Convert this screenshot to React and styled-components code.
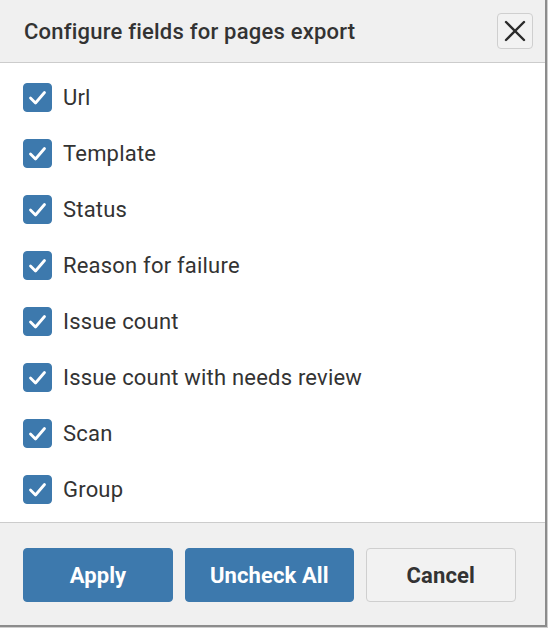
import React from "react";
import styled, { createGlobalStyle } from "styled-components";

const Global = createGlobalStyle`
  html, body { margin: 0; padding: 0; background: #cfcfcf; }
  body { font-family: Roboto, "Liberation Sans", Arial, sans-serif; color: #333; }
  * { box-sizing: border-box; }
`;

const Dialog = styled.div`
  width: 547px;
  height: 627px;
  background: #fff;
  border-right: 2px solid #8c8c8c;
  border-bottom: 2px solid #8c8c8c;
  display: flex;
  flex-direction: column;
`;

const Header = styled.div`
  height: 63px;
  flex: none;
  display: flex;
  align-items: center;
  justify-content: space-between;
  padding: 0 12px 0 24px;
  background: #f0f0f0;
  border-bottom: 1px solid #cccccc;
`;

const Title = styled.h2`
  margin: 0;
  font-size: 22px;
  font-weight: 500;
  letter-spacing: 0.22px;
  color: #333;
`;

const CloseButton = styled.button`
  width: 36px;
  height: 36px;
  padding: 0;
  display: flex;
  align-items: center;
  justify-content: center;
  background: #f2f2f2;
  border: 1px solid #cfcfcf;
  border-radius: 4px;
  color: #2b2b2b;
  cursor: pointer;
`;

const Body = styled.div`
  flex: 1;
  padding: 6px 23px 5px;
  display: flex;
  flex-direction: column;
`;

const Row = styled.label`
  height: 56px;
  display: flex;
  align-items: center;
  gap: 11px;
  font-size: 22px;
  letter-spacing: 0.2px;
  color: #333;
  cursor: pointer;
`;

const Box = styled.span`
  width: 29px;
  height: 29px;
  flex: none;
  border-radius: 4px;
  background: ${(p) => (p.$checked ? "#3d79ad" : "#fff")};
  border: 1px solid ${(p) => (p.$checked ? "#3d79ad" : "#999")};
  display: flex;
  align-items: center;
  justify-content: center;
`;

const Footer = styled.div`
  flex: none;
  display: flex;
  gap: 12px;
  padding: 25px 23px 23px;
  background: #f0f0f0;
  border-top: 1px solid #cccccc;
`;

const Button = styled.button`
  height: 54px;
  min-width: 150px;
  padding: 0 24px;
  border-radius: 4px;
  font-family: Roboto, "Liberation Sans", Arial, sans-serif;
  font-size: 22px;
  font-weight: 700;
  letter-spacing: 0.1px;
  cursor: pointer;
  background: ${(p) => (p.$primary ? "#3d79ad" : "#f2f2f2")};
  color: ${(p) => (p.$primary ? "#fff" : "#333")};
  border: 1px solid ${(p) => (p.$primary ? "#3d79ad" : "#cfcfcf")};
`;

const fields = [
  "Url",
  "Template",
  "Status",
  "Reason for failure",
  "Issue count",
  "Issue count with needs review",
  "Scan",
  "Group",
];

const Check = () => (
  <svg width="21" height="21" viewBox="0 0 21 21" fill="none">
    <polyline
      points="3.5,11 8.5,16 17.5,5.5"
      stroke="#fff"
      strokeWidth="2.8"
      strokeLinecap="round"
      strokeLinejoin="round"
    />
  </svg>
);

export default function App() {
  const [checked, setChecked] = React.useState(() => fields.map(() => true));
  return (
    <>
      <Global />
      <Dialog>
        <Header>
          <Title>Configure fields for pages export</Title>
          <CloseButton aria-label="Close">
            <svg width="22" height="22" viewBox="0 0 22 22">
              <path d="M2 2 L20 20 M20 2 L2 20" stroke="#2b2b2b" strokeWidth="2.4" strokeLinecap="round" />
            </svg>
          </CloseButton>
        </Header>
        <Body>
          {fields.map((f, i) => (
            <Row
              key={f}
              onClick={() => setChecked((c) => c.map((v, j) => (j === i ? !v : v)))}
            >
              <Box $checked={checked[i]}>{checked[i] && <Check />}</Box>
              {f}
            </Row>
          ))}
        </Body>
        <Footer>
          <Button $primary>Apply</Button>
          <Button $primary onClick={() => setChecked(fields.map(() => false))}>
            Uncheck All
          </Button>
          <Button>Cancel</Button>
        </Footer>
      </Dialog>
    </>
  );
}
